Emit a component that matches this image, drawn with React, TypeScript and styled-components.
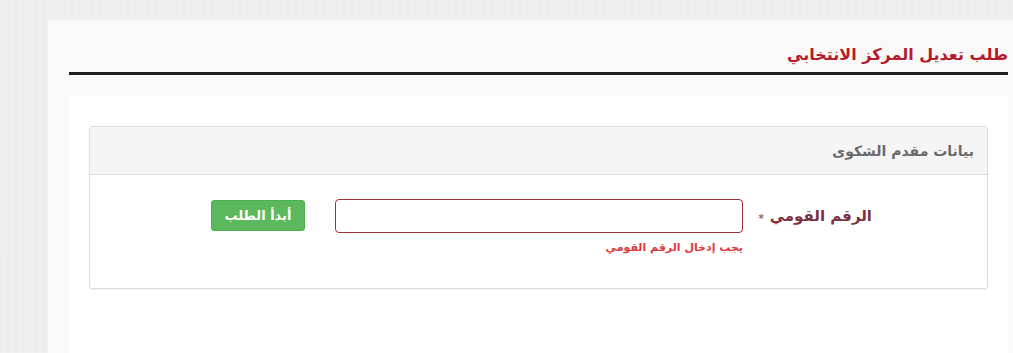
import React from "react";
import styled, { createGlobalStyle } from "styled-components";

const Global = createGlobalStyle`
  html, body { margin: 0; padding: 0; }
  body {
    font-family: "DejaVu Sans", "Noto Sans", sans-serif;
    background-color: #efefef;
    background-image:
      repeating-linear-gradient(0deg, rgba(255,255,255,0.18) 0 1px, transparent 1px 4px),
      repeating-linear-gradient(90deg, rgba(0,0,0,0.008) 0 3px, transparent 3px 7px);
    min-height: 353px;
    overflow: hidden;
  }
`;

const Page = styled.div`
  padding: 20px 0 0 48px;
  height: 333px;
`;

const Container = styled.div`
  direction: rtl;
  background: #f9f9f9;
  height: 100%;
  padding: 0 5px 0 21px;
`;

const TitleBar = styled.div`
  border-bottom: 3px solid #1f1f1f;
  display: flex;
  align-items: flex-end;
  padding-bottom: 9px;
  box-sizing: border-box;
  height: 55px;
`;

const Title = styled.h2`
  margin: 0;
  font-size: 16px;
  font-weight: bold;
  color: #b31b2b;
  line-height: 1;
`;

const Content = styled.div`
  margin-top: 21px;
  background: #ffffff;
  padding: 30px 20px;
  height: 260px;
  box-sizing: border-box;
`;

const Card = styled.div`
  border: 1px solid #dcdcdc;
  border-radius: 3px;
  background: #fff;
  box-shadow: 0 1px 1px rgba(0,0,0,0.05);
`;

const CardHeader = styled.div`
  height: 47px;
  background: #f5f5f5;
  border-bottom: 1px solid #dcdcdc;
  display: flex;
  align-items: center;
  padding: 0 13px;
  font-size: 14px;
  font-weight: bold;
  color: #6a6a6a;
`;

const CardBody = styled.div`
  height: 113px;
  box-sizing: border-box;
  padding: 24px 115px 0 0;
  display: flex;
  align-items: flex-start;
`;

const LabelCol = styled.div`
  width: 129px;
  height: 34px;
  display: flex;
  align-items: center;
  gap: 6px;
  color: #7d3042;
  font-size: 15px;
  font-weight: bold;
`;

const Star = styled.span`
  font-size: 10px;
  line-height: 1;
  margin-top: 6px;
  color: #8a5a66;
`;

const FieldCol = styled.div`
  width: 408px;
  display: flex;
  flex-direction: column;
`;

const Input = styled.input`
  box-sizing: border-box;
  width: 100%;
  height: 34px;
  border: 1px solid #a1303d;
  border-radius: 4px;
  background: #fff;
  outline: none;
  font-family: inherit;
`;

const ErrorText = styled.span`
  margin-top: 8px;
  font-size: 11px;
  font-weight: bold;
  color: #e0393e;
`;

const Button = styled.button`
  margin-right: 30px;
  margin-top: 1px;
  width: 94px;
  height: 31px;
  border: 1px solid #4cae4c;
  border-radius: 3px;
  background: #5cb85c;
  color: #fff;
  font-family: inherit;
  font-size: 13px;
  font-weight: bold;
  padding: 0;
`;

export default function App() {
  return (
    <>
      <Global />
      <Page>
        <Container>
          <TitleBar>
            <Title>طلب تعديل المركز الانتخابي</Title>
          </TitleBar>
          <Content>
            <Card>
              <CardHeader>بيانات مقدم الشكوى</CardHeader>
              <CardBody>
                <LabelCol>
                  <span>الرقم القومي</span>
                  <Star>*</Star>
                </LabelCol>
                <FieldCol>
                  <Input type="text" />
                  <ErrorText>يجب إدخال الرقم القومي</ErrorText>
                </FieldCol>
                <Button>أبدأ الطلب</Button>
              </CardBody>
            </Card>
          </Content>
        </Container>
      </Page>
    </>
  );
}
